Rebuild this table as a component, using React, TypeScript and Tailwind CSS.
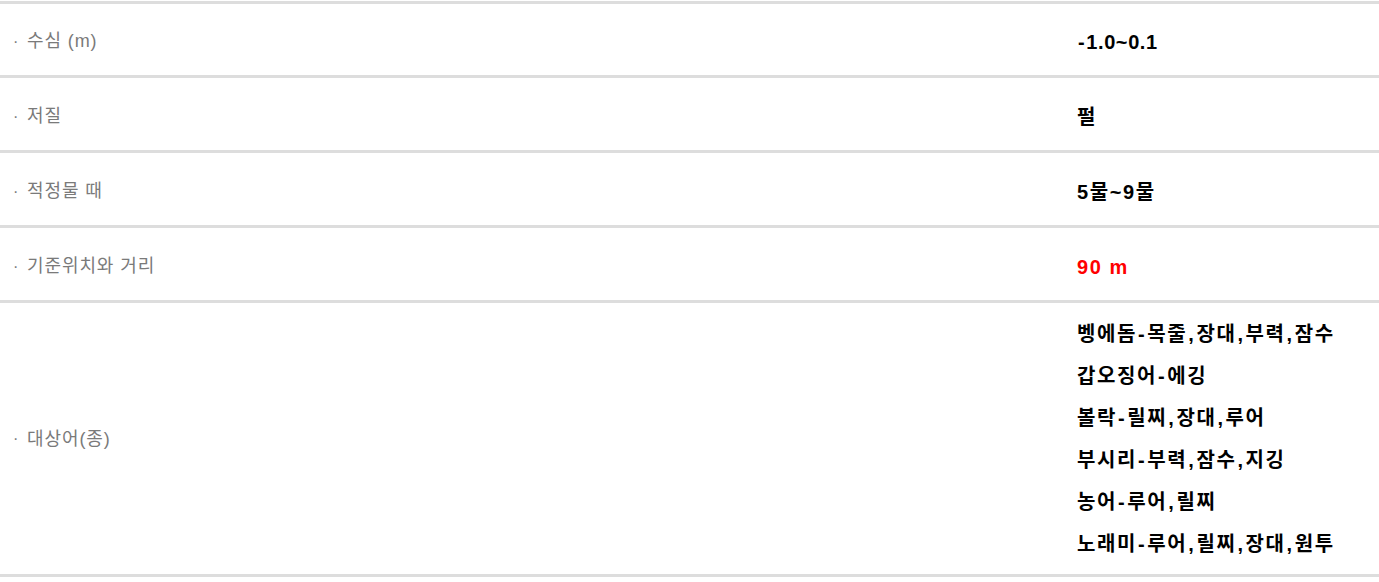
const ROWS: { label: string; values: string[]; red?: boolean }[] = [
  { label: "수심 (m)", values: ["-1.0~0.1"] },
  { label: "저질", values: ["펄"] },
  { label: "적정물 때", values: ["5물~9물"] },
  { label: "기준위치와 거리", values: ["90 m"], red: true },
  {
    label: "대상어(종)",
    values: [
      "벵에돔-목줄,장대,부력,잠수",
      "갑오징어-에깅",
      "볼락-릴찌,장대,루어",
      "부시리-부력,잠수,지깅",
      "농어-루어,릴찌",
      "노래미-루어,릴찌,장대,원투",
    ],
  },
];

// punctuation in the value column sits wider than the default font gives
function Value({ text }: { text: string }) {
  const parts = text.split(/([-,])/);
  return (
    <>
      {parts.map((p, i) =>
        p === "," || p === "-" ? (
          <span key={i} className="px-[1px]">
            {p}
          </span>
        ) : (
          <span key={i}>{p}</span>
        )
      )}
    </>
  );
}

export default function App() {
  return (
    <div className="w-[1379px] h-[582px] bg-white pt-px font-['Liberation_Sans','Noto_Sans_CJK_KR',sans-serif]">
      <div className="border-t-[3px] border-[#dddddd]">
        {ROWS.map((row, i) => {
          const multi = row.values.length > 1;
          const latin = /^[-0-9.~]+$/.test(row.values[0]);
          return (
            <div
              key={row.label}
              className={`flex items-center border-b-[3px] border-[#dddddd] ${
                multi ? "pt-[10px] pb-[9px]" : i === 0 ? "h-[74px] pt-[4px]" : "h-[75px] pt-[5px]"
              }`}
            >
              <div className="w-[1077px] pl-[13px] text-[18px] tracking-[0.9px] text-[#7a7a7a] flex items-center">
                <span className="w-[14px] tracking-normal text-[16px]">·</span>
                <span>{row.label}</span>
              </div>
              <div
                className={`flex-1 text-[20px] font-bold ${latin ? "tracking-[0.6px]" : "tracking-[1.6px]"} ${
                  row.red ? "text-[#ff0000]" : "text-black"
                }`}
              >
                {row.values.map((v) => (
                  <div key={v} className={multi ? "leading-[42px]" : "leading-[26px]"}>
                    <Value text={v} />
                  </div>
                ))}
              </div>
            </div>
          );
        })}
      </div>
    </div>
  );
}
